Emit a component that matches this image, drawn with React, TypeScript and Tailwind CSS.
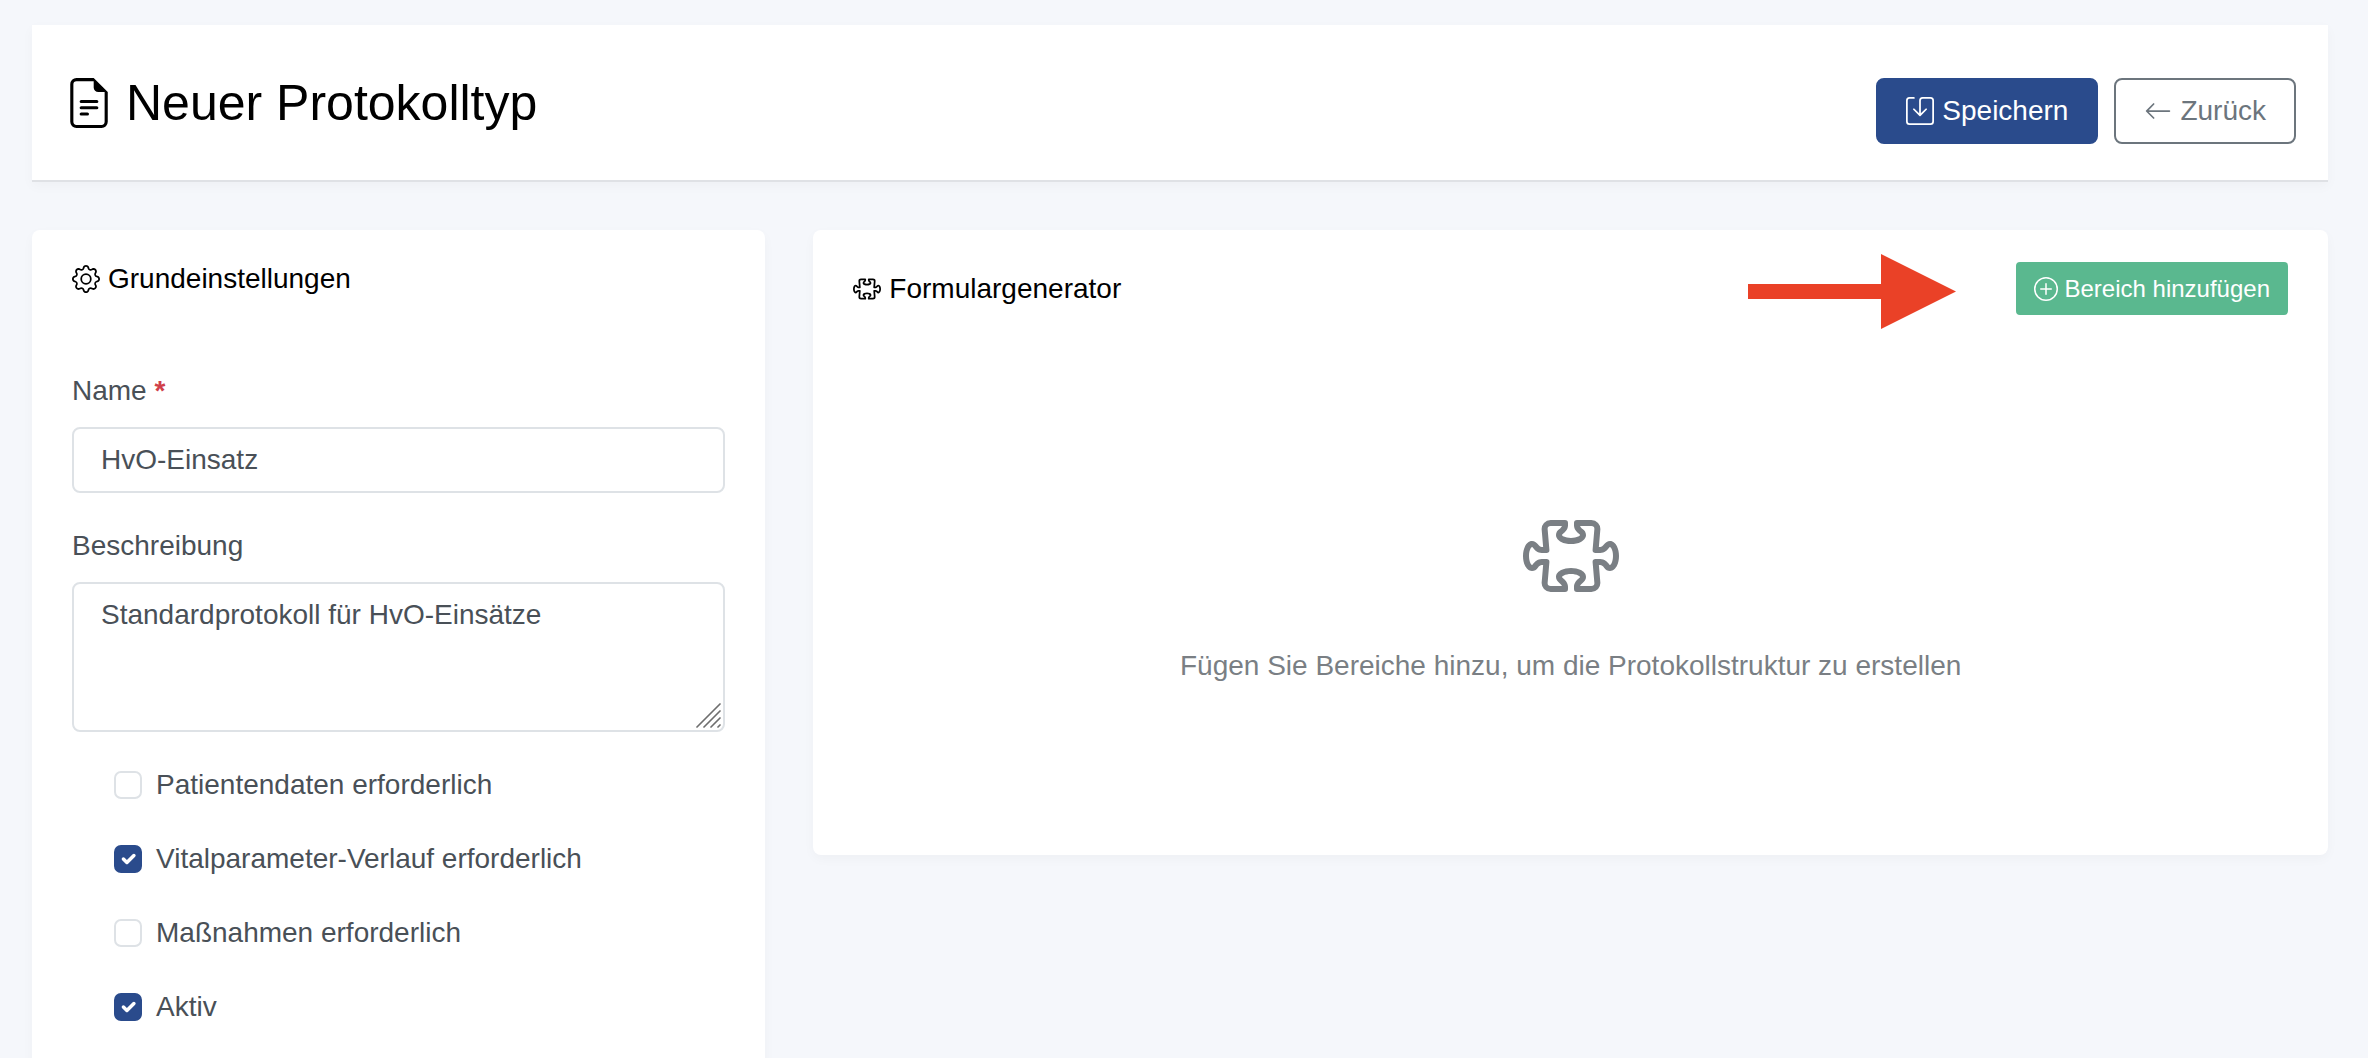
import { useState } from "react";
import {
  BsArrowLeft,
  BsFileEarmarkText,
  BsGear,
  BsPlusCircle,
  BsPuzzle,
  BsSave,
} from "react-icons/bs";

const options = [
  { id: "patient", label: "Patientendaten erforderlich", checked: false },
  { id: "vitals", label: "Vitalparameter-Verlauf erforderlich", checked: true },
  { id: "measures", label: "Maßnahmen erforderlich", checked: false },
  { id: "active", label: "Aktiv", checked: true },
];

const PageHeader = () => {
  return (
    <header className="flex items-center justify-between border-b-2 border-[#dfe1e5] bg-white px-8 pt-[37px] pb-9 shadow-[0_4px_12px_rgba(0,0,0,0.03)]">
      <h1 className="flex items-center gap-3 text-[50px] leading-[60px] text-black">
        <BsFileEarmarkText className="size-[50px]" />
        Neuer Protokolltyp
      </h1>
      <div className="flex gap-4 pt-4">
        <button
          type="button"
          className="flex items-center gap-2 rounded-lg border-2 border-[#2a4b8c] bg-[#2a4b8c] px-7 py-2.5 text-white"
        >
          <BsSave className="size-7" />
          Speichern
        </button>
        <a
          href="#"
          className="flex items-center gap-2 rounded-lg border-2 border-[#6c757d] px-7 py-2.5 text-[#6c757d]"
        >
          <BsArrowLeft className="size-7" />
          Zurück
        </a>
      </div>
    </header>
  );
};

const CheckOption = ({
  id,
  label,
  checked,
}: {
  id: string;
  label: string;
  checked: boolean;
}) => {
  const [isChecked, setIsChecked] = useState(checked);

  return (
    <div className="flex items-center gap-3.5 pl-[42px]">
      <span className="relative flex size-7">
        <input
          id={id}
          type="checkbox"
          checked={isChecked}
          onChange={() => setIsChecked(!isChecked)}
          className="size-7 appearance-none rounded-[7px] border-2 border-[#dee2e6] bg-white checked:border-[#2a4b8c] checked:bg-[#2a4b8c]"
        />
        {isChecked && (
          <svg
            viewBox="0 0 28 28"
            fill="none"
            className="pointer-events-none absolute inset-0 size-7"
          >
            <path
              d="M9.4 14l3.5 3.5 7-7"
              stroke="white"
              strokeWidth="3.5"
              strokeLinecap="round"
              strokeLinejoin="round"
            />
          </svg>
        )}
      </span>
      <label htmlFor={id}>{label}</label>
    </div>
  );
};

const BasicSettings = () => {
  return (
    <section className="col-span-4 rounded-lg bg-white px-10 pt-7 pb-10 shadow-[0_4px_12px_rgba(0,0,0,0.03)]">
      <h2 className="flex items-center gap-2 text-black">
        <BsGear className="size-7" />
        Grundeinstellungen
      </h2>
      <form className="flex flex-col gap-8 pt-[70px]">
        <div className="flex flex-col gap-[15px]">
          <label htmlFor="name">
            Name <span className="font-bold text-[#d0404a]">*</span>
          </label>
          <input
            id="name"
            type="text"
            defaultValue="HvO-Einsatz"
            className="w-full rounded-lg border-2 border-[#dee2e6] px-[27px] py-2.5"
          />
        </div>
        <div className="flex flex-col gap-[15px]">
          <label htmlFor="description">Beschreibung</label>
          <div className="relative">
            <textarea
              id="description"
              defaultValue="Standardprotokoll für HvO-Einsätze"
              className="block h-[150px] w-full resize-none rounded-lg border-2 border-[#dee2e6] px-[27px] py-2.5"
            />
            <svg
              viewBox="0 0 25 25"
              className="pointer-events-none absolute right-1 bottom-1 size-[25px]"
            >
              <path
                d="M1 24L24 1M8 24L24 8M15 24L24 15M22 24L24 22"
                stroke="#6e6e6e"
                strokeWidth="1.7"
                strokeLinecap="round"
              />
            </svg>
          </div>
        </div>
        {options.map((option) => (
          <CheckOption key={option.id} {...option} />
        ))}
      </form>
    </section>
  );
};

const FormGenerator = () => {
  return (
    <section className="col-span-8 self-start rounded-lg bg-white shadow-[0_4px_12px_rgba(0,0,0,0.03)]">
      <div className="flex items-center justify-between px-10 py-8">
        <h2 className="flex items-center gap-2 text-black">
          <BsPuzzle className="size-7" />
          Formulargenerator
        </h2>
        <div className="relative">
          {/* hint arrow pointing at the add button */}
          <svg
            viewBox="0 0 208 75"
            className="pointer-events-none absolute -top-2 right-full mr-15 h-[75px] w-[208px]"
          >
            <path d="M0 30H133V0L208 37.5L133 75V45H0Z" fill="#ea4127" />
          </svg>
          <button
            type="button"
            className="flex items-center gap-[7px] rounded border-2 border-[#5ab88f] bg-[#5ab88f] px-4 py-1.5 text-2xl leading-[37px] text-white"
          >
            <BsPlusCircle className="size-6" />
            Bereich hinzufügen
          </button>
        </div>
      </div>
      <div className="flex flex-col items-center gap-[41px] px-10 pt-[161px] pb-42 text-[#7a7f84]">
        <BsPuzzle className="size-24" />
        <p>Fügen Sie Bereiche hinzu, um die Protokollstruktur zu erstellen</p>
      </div>
    </section>
  );
};

const App = () => {
  return (
    <main className="min-h-screen bg-[#f5f7fb] pt-[25px] pr-10 pl-8 font-['Liberation_Sans',Arial,sans-serif] text-[28px] leading-[42px] text-[#495057]">
      <PageHeader />
      <div className="mt-12 grid grid-cols-12 gap-12">
        <BasicSettings />
        <FormGenerator />
      </div>
    </main>
  );
};

export default App;
